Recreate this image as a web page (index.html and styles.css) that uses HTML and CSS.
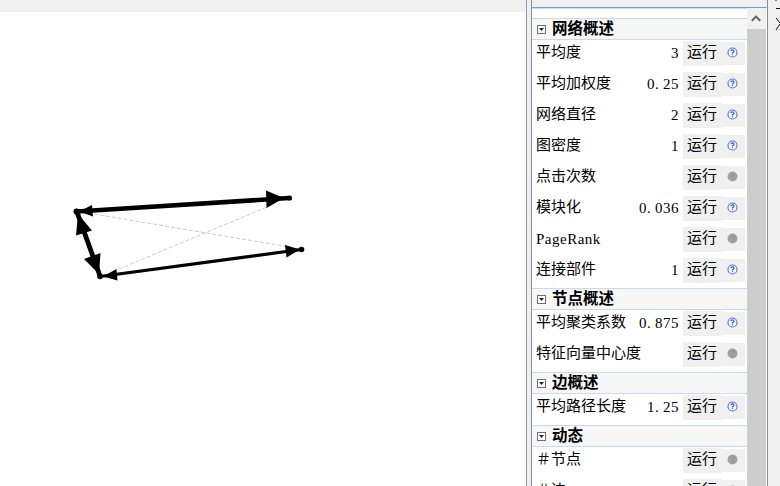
FILE: index.html
```html
<!DOCTYPE html>
<html lang="zh-CN">
<head>
<meta charset="utf-8">
<title>统计</title>
<link rel="stylesheet" href="styles.css">
</head>
<body>
<svg class="defs" width="0" height="0">
  <symbol id="fold" viewBox="0 0 9 9"><rect x=".5" y=".5" width="8" height="8" fill="#fff" stroke="#707070"/><path d="M2 3h5L4.5 6z" fill="#222"/></symbol>
  <symbol id="help" viewBox="0 0 10 10"><circle cx="5" cy="5" r="4.100" fill="#f4f8ff" stroke="#5374d8"/><path d="M3.5 3.8Q3.7 2.7 5 2.7T6.4 3.9Q6.4 4.6 5 5.2V5.9M5 6.6v1" fill="none" stroke="#3156c8" stroke-width="1.1"/></symbol>
  <symbol id="nohelp" viewBox="0 0 10 10"><circle cx="5" cy="5" r="4.500" fill="#a0a0a0"/><path d="M3.5 3.8Q3.7 2.7 5 2.7T6.4 3.9Q6.4 4.6 5 5.2V5.9M5 6.6v1" fill="none" stroke="#8c8c8c" stroke-width=".8"/></symbol>
</svg>
<div class="app">
  <main class="canvas">
    <svg width="526" height="474" viewBox="0 12 526 474">
      <path d="M94 214 290 247M119 269 267 207" stroke="#b5b5b5" stroke-width=".7" stroke-dasharray="4 2" fill="none"/>
      <path d="M77 211.500 289 198" stroke="#000" stroke-width="4.6"/>
      <path d="M77 212 100 276" stroke="#000" stroke-width="4.8"/>
      <path d="M100 276.500 301 249.500" stroke="#000" stroke-width="3.2"/>
      <path d="M79 211.500 92 205 93 216.500zM284 198 266 190.500 266.500 208zM78 214 76 235.500 92 230.500zM99 274 84 259 100.500 253zM103 276.500 116.500 269 117.500 280.500zM300 249.500 285 245 286.500 257.500z"/>
      <circle cx="76.500" cy="211.500" r="3"/><circle cx="289.500" cy="198" r="2.600"/><circle cx="100" cy="276.500" r="2.800"/><circle cx="301.500" cy="249.500" r="2.800"/>
    </svg>
  </main>
  <aside class="panel">
    <div class="list">
      <section><h2><svg><use href="#fold"/></svg><span>网络概述</span></h2>
        <div class="row"><span>平均度</span><b>3</b><button>运行</button><i><svg><use href="#help"/></svg></i></div>
        <div class="row"><span>平均加权度</span><b>0<em>.</em>25</b><button>运行</button><i><svg><use href="#help"/></svg></i></div>
        <div class="row"><span>网络直径</span><b>2</b><button>运行</button><i><svg><use href="#help"/></svg></i></div>
        <div class="row"><span>图密度</span><b>1</b><button>运行</button><i><svg><use href="#help"/></svg></i></div>
        <div class="row"><span>点击次数</span><b></b><button>运行</button><i><svg><use href="#nohelp"/></svg></i></div>
        <div class="row"><span>模块化</span><b>0<em>.</em>036</b><button>运行</button><i><svg><use href="#help"/></svg></i></div>
        <div class="row"><span class="latin">PageRank</span><b></b><button>运行</button><i><svg><use href="#nohelp"/></svg></i></div>
        <div class="row"><span>连接部件</span><b>1</b><button>运行</button><i><svg><use href="#help"/></svg></i></div>
      </section>
      <section><h2><svg><use href="#fold"/></svg><span>节点概述</span></h2>
        <div class="row"><span>平均聚类系数</span><b>0<em>.</em>875</b><button>运行</button><i><svg><use href="#help"/></svg></i></div>
        <div class="row"><span>特征向量中心度</span><b></b><button>运行</button><i><svg><use href="#nohelp"/></svg></i></div>
      </section>
      <section><h2><svg><use href="#fold"/></svg><span>边概述</span></h2>
        <div class="row"><span>平均路径长度</span><b>1<em>.</em>25</b><button>运行</button><i><svg><use href="#help"/></svg></i></div>
      </section>
      <section><h2><svg><use href="#fold"/></svg><span>动态</span></h2>
        <div class="row"><span>＃节点</span><b></b><button>运行</button><i><svg><use href="#nohelp"/></svg></i></div>
        <div class="row"><span>＃边</span><b></b><button>运行</button><i><svg><use href="#nohelp"/></svg></i></div>
      </section>
    </div>
    <div class="scroll"><div class="up"><svg width="10" height="7" viewBox="0 0 10 7"><path d="M.8 5.800 5 1.600 9.200 5.800" fill="none" stroke="#606060" stroke-width="2"/></svg></div></div>
  </aside>
  <div class="dock"><svg width="12" height="40" viewBox="768 0 12 40"><path d="M776 0v1M776 8.500h4M776 18l4 5M776 30l4-6" fill="none" stroke="#111"/></svg></div>
</div>
</body>
</html>
```

FILE: styles.css
```css
* { box-sizing: border-box; }
body { margin: 0; overflow: hidden; background: #f0f0f0; color: #000; font-family: "Noto Sans CJK SC", sans-serif; }
.defs { position: absolute; }
.app { display: flex; width: 780px; height: 486px; overflow: hidden; }
.canvas { width: 527px; height: 486px; padding-top: 12px; border-right: 1px solid #9898b0; background: linear-gradient(#f0f0f0 12px, #fff 12px); }
.canvas svg { display: block; }
.panel { display: flex; width: 237px; margin-left: 4px; padding-top: 7px; border: solid #8a8a9c; border-width: 0 1px; }
.list { width: 215px; height: 479px; overflow: hidden; padding-top: 10px; background: #fff; border-top: 1px solid #7a9abf; box-shadow: inset 0 1px #d0daf2; }
h2 { display: flex; align-items: flex-start; gap: 6px; height: 22px; margin: 0; padding: 0 0 0 5px; border: solid #ccd8f2; border-width: 1px 0; background: #f7f7f7; font-size: 15.500px; line-height: 17px; font-weight: 700; }
h2 svg { width: 9px; height: 9px; margin-top: 6px; }
.row { display: flex; height: 31px; padding: 1px 2px 0 4px; font-size: 15px; line-height: 20px; font-weight: 400; white-space: nowrap; }
.row b { flex: 1; padding: 2px 4px 0 0; text-align: right; }
.row b, .latin { font-family: "Liberation Serif", serif; font-size: 15px; letter-spacing: .5px; font-weight: 400; }
.row em { display: inline-block; width: 8px; font-style: normal; text-align: left; }
.row .latin { padding-top: 2px; }
button { width: 39px; height: 25px; padding: 0 1px 5px 0; border: 0; background: #f0f0f0; color: #000; font: 400 15px/20px "Noto Sans CJK SC", sans-serif; text-align: center; }
.row i { display: flex; align-items: flex-start; width: 23px; height: 23px; margin-top: 1px; padding: 5px 0 0 5px; background: #f0f0f0; }
.row i svg { width: 11px; height: 11px; }
.scroll { width: 20px; height: 479px; border-top: 1px solid #7a9abf; border-right: 1px solid #fff; background: #cdcdcd; }
.up { display: flex; align-items: center; justify-content: center; height: 21px; padding-right: 1px; background: #f0f0f0; }
.dock { width: 12px; }
```
